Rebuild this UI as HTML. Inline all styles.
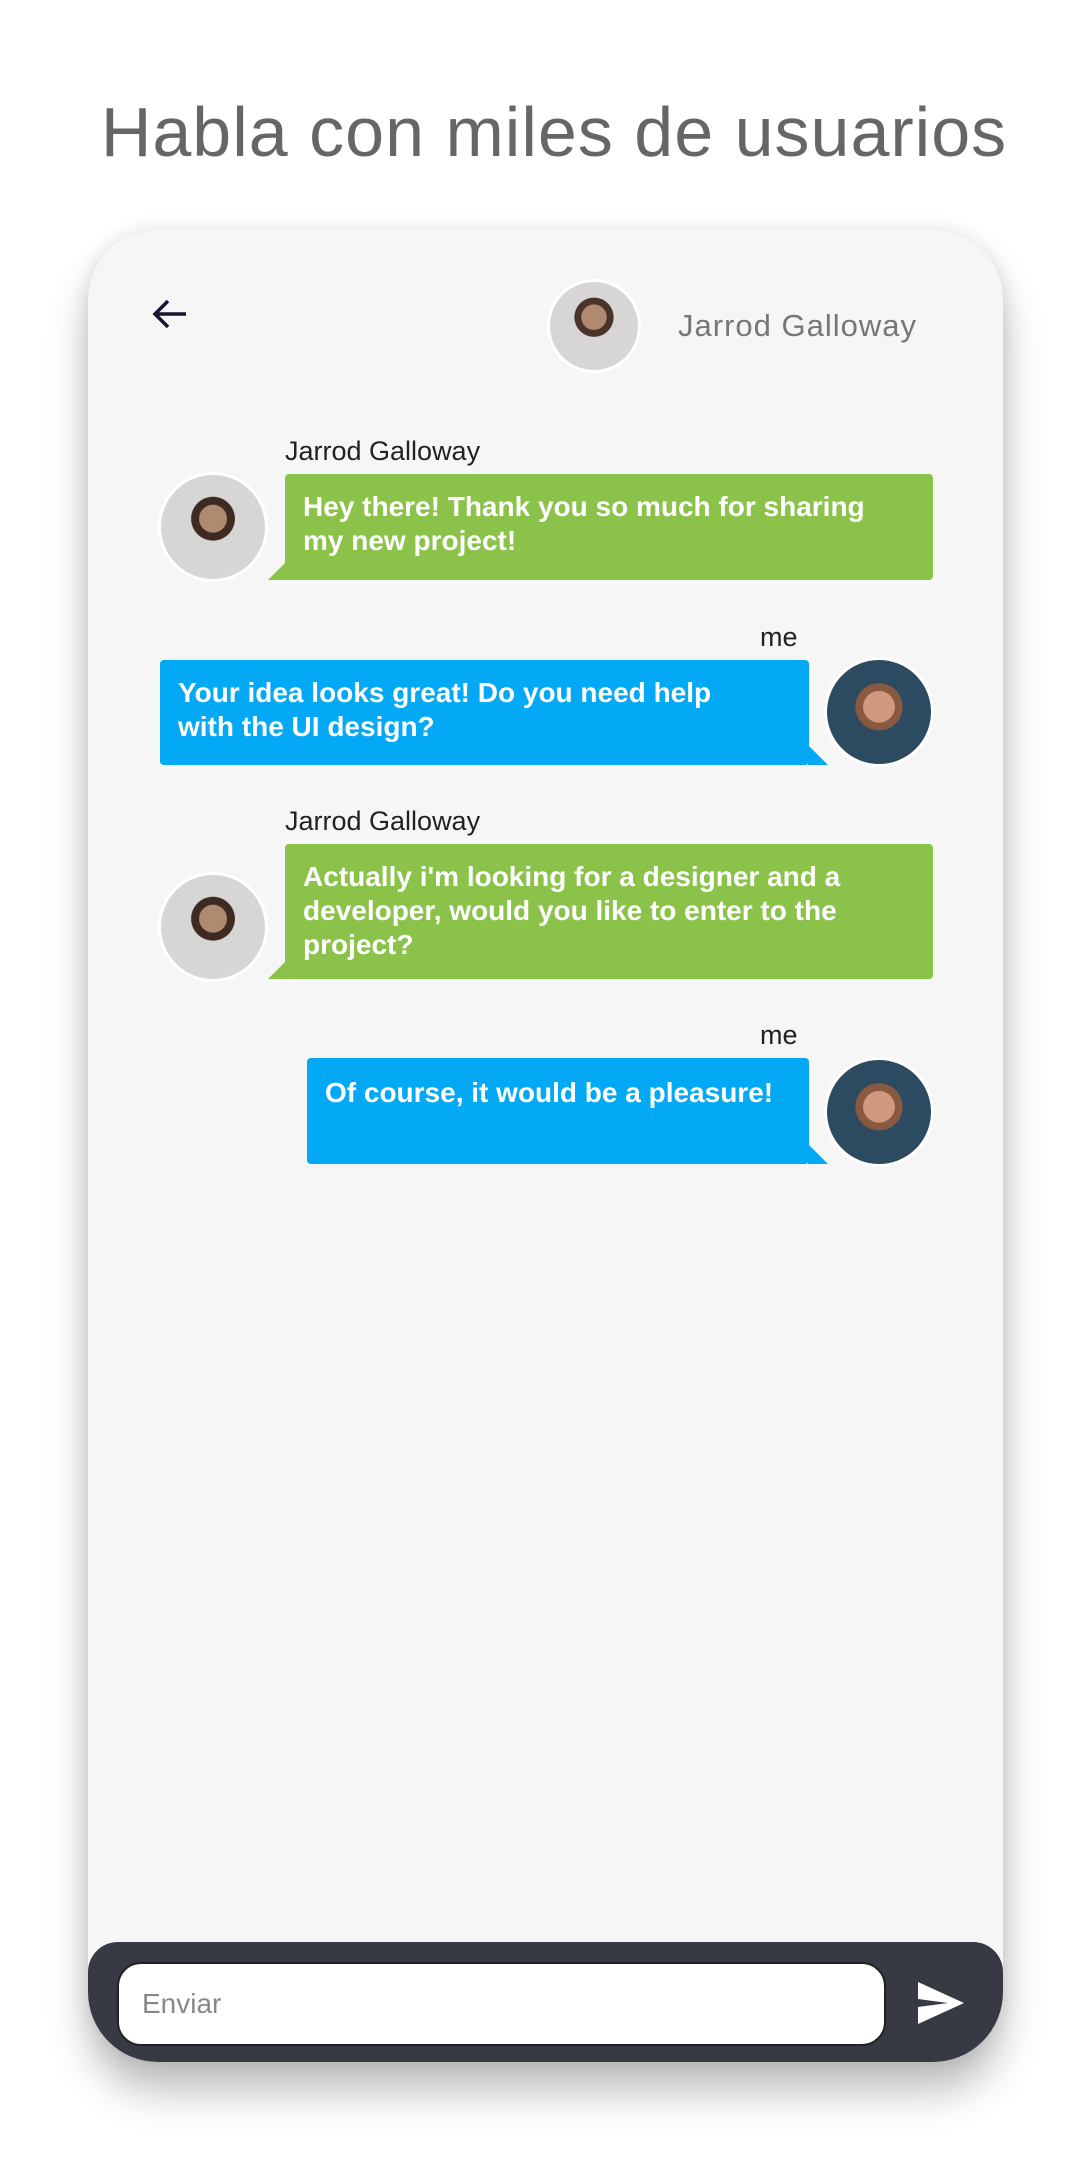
<!DOCTYPE html>
<html><head><meta charset="utf-8"><style>
*{margin:0;padding:0;box-sizing:border-box}
body{width:1080px;height:2160px;background:#fff;position:relative;overflow:hidden;font-family:"Liberation Sans",sans-serif}
.title{position:absolute;left:0;width:1108px;text-align:center;top:92px;font-size:70px;color:#666;letter-spacing:1px}
.phone{position:absolute;left:88px;top:230px;width:915px;height:1832px;background:#f6f6f6;border-radius:70px;box-shadow:0 30px 40px rgba(0,0,0,0.25),0 0 20px rgba(0,0,0,0.1);overflow:hidden}
.abs{position:absolute}
.av{position:absolute;border-radius:50%;overflow:hidden;border:3px solid #fff}
.bub{position:absolute;color:#fff;font-weight:bold;font-size:28px;line-height:34px;padding:16px 18px;border-radius:4px}
.g{background:#8bc34a}.b{background:#03a9f4}
.lbl{position:absolute;font-size:27px;color:#222}
</style></head><body>
<div class="title">Habla con miles de usuarios</div>
<div class="phone">
 <svg class="abs" style="left:62px;top:66px" width="40" height="36" viewBox="0 0 40 36"><path d="M36 18H5M18 5L5 18L18 31" stroke="#1a1330" stroke-width="3.5" fill="none"/></svg>
 <div class="av" style="left:459px;top:49px;width:94px;height:94px;background:radial-gradient(circle at 50% 40%,#b08a70 0 18%,#4a3328 19% 28%,#d8d6d4 29%)"></div>
 <div class="abs" style="left:590px;top:78px;font-size:31px;color:#777;letter-spacing:1px">Jarrod Galloway</div>

 <div class="lbl" style="left:197px;top:206px">Jarrod Galloway</div>
 <div class="av" style="left:70px;top:242px;width:110px;height:110px;background:radial-gradient(circle at 50% 42%,#b08a70 0 17%,#3e2a20 18% 27%,#d8d6d4 28%)"></div>
 <div class="bub g" style="left:197px;top:244px;width:648px;height:106px;padding-right:40px">Hey there! Thank you so much for sharing my new project!</div>
 <svg class="abs" style="left:180px;top:330px" width="20" height="20"><path d="M0 20H20V0Z" fill="#8bc34a"/></svg>

 <div class="lbl" style="left:672px;top:392px">me</div>
 <div class="bub b" style="left:72px;top:430px;width:649px;height:105px;padding-right:70px">Your idea looks great! Do you need help with the UI design?</div>
 <svg class="abs" style="left:720px;top:515px" width="20" height="20"><path d="M0 0V20H20Z" fill="#03a9f4"/></svg>
 <div class="av" style="left:736px;top:427px;width:110px;height:110px;background:radial-gradient(circle at 50% 45%,#d09a80 0 20%,#8a5a40 21% 30%,#2c4a60 31%)"></div>

 <div class="lbl" style="left:197px;top:576px">Jarrod Galloway</div>
 <div class="av" style="left:70px;top:642px;width:110px;height:110px;background:radial-gradient(circle at 50% 42%,#b08a70 0 17%,#3e2a20 18% 27%,#d8d6d4 28%)"></div>
 <div class="bub g" style="left:197px;top:614px;width:648px;height:135px">Actually i'm looking for a designer and a developer, would you like to enter to the project?</div>
 <svg class="abs" style="left:180px;top:729px" width="20" height="20"><path d="M0 20H20V0Z" fill="#8bc34a"/></svg>

 <div class="lbl" style="left:672px;top:790px">me</div>
 <div class="bub b" style="left:219px;top:828px;width:502px;height:106px;padding-top:18px">Of course, it would be a pleasure!</div>
 <svg class="abs" style="left:720px;top:914px" width="20" height="20"><path d="M0 0V20H20Z" fill="#03a9f4"/></svg>
 <div class="av" style="left:736px;top:827px;width:110px;height:110px;background:radial-gradient(circle at 50% 45%,#d09a80 0 20%,#8a5a40 21% 30%,#2c4a60 31%)"></div>

 <div class="abs" style="left:0;top:1712px;width:915px;height:120px;background:#373a42;border-radius:30px 30px 0 0"></div>
 <div class="abs" style="left:29px;top:1732px;width:769px;height:84px;background:#fff;border-radius:24px;border:2px solid #222;"></div>
 <div class="abs" style="left:54px;top:1758px;font-size:28px;color:#888">Enviar</div>
 <svg class="abs" style="left:828px;top:1750px" width="50" height="46" viewBox="0 0 50 46"><path d="M2 2L48 23L2 44L2 27L32 23L2 19Z" fill="#fff"/></svg>
</div>
</body></html>
